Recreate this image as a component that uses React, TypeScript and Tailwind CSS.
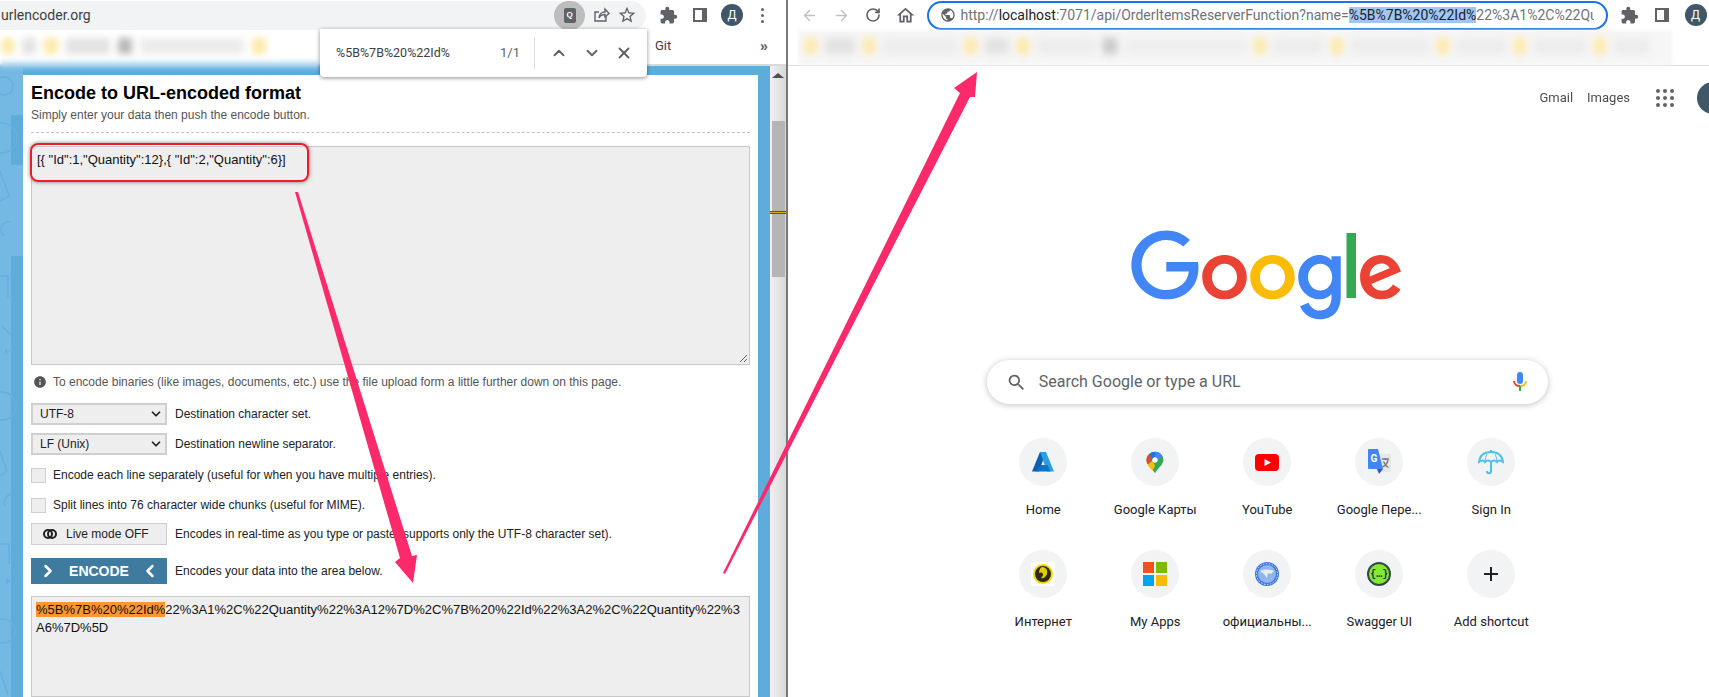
import { ChevronDown, ChevronUp, ChevronLeft, ChevronRight, X, ArrowLeft, ArrowRight, RotateCw } from "lucide-react";
import { MdExtension, MdPublic, MdSearch, MdOutlineHome, MdInfo, MdStarBorder } from "react-icons/md";

const shortcuts = [
  { label: "Home", icon: <AzureIcon /> },
  { label: "Google Карты", icon: <MapsIcon /> },
  { label: "YouTube", icon: <YoutubeIcon /> },
  { label: "Google Пере...", icon: <TranslateIcon /> },
  { label: "Sign In", icon: <UmbrellaIcon /> },
  { label: "Интернет", icon: <InternetIcon /> },
  { label: "My Apps", icon: <MicrosoftIcon /> },
  { label: "официальны...", icon: <GlobeBadgeIcon /> },
  { label: "Swagger UI", icon: <SwaggerIcon /> },
  { label: "Add shortcut", icon: <PlusIcon /> },
];

function AzureIcon() {
  return (
    <svg width="24" height="24" viewBox="0 0 24 24">
      <path d="M9 2h6L8 21.5H1z" fill="#0a5fb0" />
      <path d="M15 2l8 19.5h-7L9 2z" fill="#2a9fe0" />
      <path d="M10 15l6.5 0 3 6.5H5z" fill="#0f74c8" />
    </svg>
  );
}

function MapsIcon() {
  return (
    <svg width="20" height="25" viewBox="0 0 24 28">
      <path d="M12 1a10 10 0 0 1 10 10c0 6-6 9-10 16C8 20 2 17 2 11A10 10 0 0 1 12 1z" fill="#34a853" />
      <path d="M5 4a10 10 0 0 1 7-3v7a3 3 0 0 0-3 2z" fill="#1a73e8" />
      <path d="M12 1a10 10 0 0 1 9 6l-6 3a3 3 0 0 0-3-2z" fill="#4285f4" />
      <path d="M5 4l4 6-6 6c-2-4-2-9 2-12z" fill="#ea4335" />
      <path d="M9 12l-6 5 6 7 3-6z" fill="#fbbc04" />
      <circle cx="12" cy="11" r="3.2" fill="#fff" />
    </svg>
  );
}

function YoutubeIcon() {
  return (
    <svg width="24" height="17" viewBox="0 0 24 17">
      <rect width="24" height="17" rx="4" fill="#ff0000" />
      <path d="M9.5 5l6.5 3.5L9.5 12z" fill="#fff" />
    </svg>
  );
}

function TranslateIcon() {
  return (
    <svg width="24" height="26" viewBox="0 0 24 26">
      <rect x="10" y="5" width="14" height="18" fill="#e4e6e8" />
      <path d="M15 10h7M18.5 9v2M21 11c-1 4-3 6-5.5 7M16.5 12.5c1 2.5 3 5 5 6" stroke="#777" strokeWidth="1.3" fill="none" />
      <path d="M1 1c0-.5.4-1 1-1h9l5 20H2c-.6 0-1-.4-1-1z" fill="#4285f4" />
      <path d="M10 20h6l-4 5z" fill="#3a55c8" />
      <text x="3.5" y="13" fontFamily="Roboto, sans-serif" fontWeight="700" fontSize="10" fill="#fff">G</text>
    </svg>
  );
}

function UmbrellaIcon() {
  return (
    <svg width="26" height="26" viewBox="0 0 26 26" fill="none" stroke="#4fc0e8" strokeWidth="2">
      <path d="M1 13C2 6 7 3 13 3s11 3 12 10c-3-2-5-2-6 0-2-2-4-2-6 0-2-2-4-2-6 0-1-2-3-2-6 0z" />
      <path d="M13 1v2M13 13v9c0 3-4 3-4 0" />
      <path d="M9 5c-1 2-2 5-2 8M17 5c1 2 2 5 2 8" strokeWidth="1" />
    </svg>
  );
}

function InternetIcon() {
  return (
    <div className="flex h-6 w-6 items-center justify-center rounded-[2px] bg-white">
      <svg width="20" height="20" viewBox="0 0 20 20">
        <circle cx="10" cy="10" r="9" fill="#2b2b1a" stroke="#f2d800" strokeWidth="2" />
        <path d="M9 3c4 0 6 3 5 7-1 3-4 5-6 4 2-2 3-4 1-5-1-1-2 0-3 0 0-3 1-5 3-6z" fill="#e8c800" />
      </svg>
    </div>
  );
}

function MicrosoftIcon() {
  return (
    <div className="grid grid-cols-2 gap-[2px]">
      <div className="h-[11px] w-[11px] bg-[#f25022]" />
      <div className="h-[11px] w-[11px] bg-[#7fba00]" />
      <div className="h-[11px] w-[11px] bg-[#00a4ef]" />
      <div className="h-[11px] w-[11px] bg-[#ffb900]" />
    </div>
  );
}

function GlobeBadgeIcon() {
  return (
    <svg width="24" height="24" viewBox="0 0 24 24">
      <circle cx="12" cy="12" r="12" fill="#3f78d8" />
      <circle cx="12" cy="12" r="9" fill="#8fb5ee" />
      <path d="M5 9c4-2 10-2 14 0l-3 3-3-1-1 5-3-4z" fill="#e8edf2" />
      <circle cx="12" cy="12" r="10.5" fill="none" stroke="#dce8fa" strokeWidth="1" strokeDasharray="1.5 1.5" />
    </svg>
  );
}

function SwaggerIcon() {
  return (
    <div className="flex h-6 w-6 items-center justify-center rounded-full border-2 border-[#2f4a4f] bg-[#85ea2d] font-['Liberation_Mono',monospace] text-[10px] font-bold text-[#173647]">
      {"{…}"}
    </div>
  );
}

function PlusIcon() {
  return (
    <svg width="14" height="14" viewBox="0 0 14 14">
      <path d="M7 0v14M0 7h14" stroke="#202124" strokeWidth="2" />
    </svg>
  );
}

function ShareIcon() {
  return (
    <svg width="18" height="18" viewBox="0 0 18 18" fill="none" stroke="#5f6368" strokeWidth="1.4">
      <path d="M14 10v5H3V6h4" />
      <path d="M7 12c0-4 3-6 6-6V3l4 4.5L13 11V8.500c-3 0-5 1-6 3.500z" />
    </svg>
  );
}

function PanelIcon() {
  return <div className="h-[14px] w-[14px] border-[2px] border-r-[5px] border-[#5f6368] bg-white" />;
}

function Avatar() {
  return (
    <div className="flex h-[22px] w-[22px] items-center justify-center rounded-full bg-[#3f5766] font-['Roboto',sans-serif] text-[12px] text-white">
      Д
    </div>
  );
}

function Dots() {
  return (
    <div className="flex w-[4px] flex-col gap-[3px]">
      <div className="h-[3px] w-[3px] rounded-full bg-[#5f6368]" />
      <div className="h-[3px] w-[3px] rounded-full bg-[#5f6368]" />
      <div className="h-[3px] w-[3px] rounded-full bg-[#5f6368]" />
    </div>
  );
}

function SelectBox({ value }: { value: string }) {
  return (
    <div className="flex h-[22px] w-[136px] items-center justify-between border-2 border-[#cfcfcf] bg-[#eeeeee] pl-[7px] pr-[2px] text-[12px] text-[#222]">
      {value}
      <ChevronDown className="h-[14px] w-[14px] text-[#222]" strokeWidth={3} />
    </div>
  );
}

function LeftStrip() {
  return (
    <svg className="w-[23px] shrink-0" width="23" height="631" viewBox="0 0 23 631" fill="none">
      <rect width="23" height="631" fill="#74b9e3" />
      <rect x="11" y="49" width="12" height="50" fill="#5dacdc" />
      <rect x="11" y="190" width="12" height="441" fill="#5dacdc" />
      <g stroke="#66b0de" strokeWidth="1.5">
        <circle cx="4" cy="20" r="9" />
        <circle cx="2" cy="72" r="15" />
        <path d="M0 105l9 25-9 5M4 170a8 8 0 0 1 7-14M0 210h8v22M2 260l8 8M5 285h4M6 283v4" />
        <circle cx="2" cy="340" r="14" />
        <path d="M0 385l7 20-7 5M5 440a9 9 0 0 1 6-12M1 478l8 0v20M5 515h5M7 512v6" />
        <circle cx="3" cy="565" r="12" />
        <path d="M0 605l8 24" />
      </g>
    </svg>
  );
}

function BlurBookmarks({ items }: { items: [string, number][] }) {
  return (
    <div className="flex items-center gap-[8px] blur-[3.5px]">
      {items.map(([color, width], index) => (
        <div key={index} className="h-[16px]" style={{ backgroundColor: color, width }} />
      ))}
    </div>
  );
}

export default function App() {
  return (
    <div className="relative flex h-[697px] w-[1709px] overflow-hidden bg-white font-['Liberation_Sans',sans-serif]">
      {/* Left browser window */}
      <div className="flex h-full w-[786px] shrink-0 flex-col">
        <div className="flex h-[30px] items-center bg-white">
          <div className="flex h-[29px] w-[646px] items-center rounded-r-full bg-[#f1f3f4]">
            <span className="pl-[1px] font-['Roboto',sans-serif] text-[14px] text-[#3c4043]">urlencoder.org</span>
            <div className="ml-auto flex items-center gap-[7px] pr-[9px]">
              <div className="flex h-[29px] w-[31px] items-center justify-center rounded-full bg-[#bdbdbd]">
                <div className="flex h-[15px] w-[12px] items-center justify-center rounded-[2px] bg-[#5f6368] text-[8px] font-bold leading-none text-white">Q</div>
              </div>
              <ShareIcon />
              <MdStarBorder className="h-[20px] w-[20px] text-[#5f6368]" />
            </div>
          </div>
          <div className="flex flex-1 items-center pl-[13px]">
            <MdExtension className="h-[19px] w-[19px] text-[#5f6368]" />
            <div className="ml-[15px]"><PanelIcon /></div>
            <div className="ml-[14px]"><Avatar /></div>
            <div className="ml-[18px]"><Dots /></div>
          </div>
        </div>

        <div className="relative flex h-[36px] items-center border-b-2 border-[#d9d9d9] bg-white pb-[2px] pl-[2px]">
          <BlurBookmarks items={[["#fde9a8", 12], ["#e2e2e2", 14], ["#fde9a8", 14], ["#e2e2e2", 44], ["#b8b8b8", 14], ["#ececec", 104], ["#fde9a8", 14]]} />
          <span className="absolute left-[655px] font-['Roboto',sans-serif] text-[13px] text-[#3c4043]">Git</span>
          <span className="absolute left-[760px] text-[14px] font-bold text-[#5f6368]">»</span>
          <div className="absolute bottom-[-5px] left-0 h-[10px] w-[320px] bg-gradient-to-b from-white to-[#74b9e3] blur-[2px]" />
        </div>

        <div className="flex min-h-0 flex-1">
          <LeftStrip />
          <div className="flex flex-1 flex-col bg-[#5dacdc] pt-[9px] pr-[12px]">
            <div className="flex h-full flex-col bg-white px-[8px] pt-[7px] text-[#222]">
              <h1 className="text-[18px] font-bold leading-[22px] text-black">Encode to URL-encoded format</h1>
              <p className="mt-[2px] text-[12px] leading-[18px] text-[#555]">Simply enter your data then push the encode button.</p>
              <div className="mt-[8px] border-t border-dashed border-[#c4c4c4]" />

              <div className="relative mt-[13px] h-[219px] border border-[#c8c8c8] bg-[#eeeeee] px-[5px] pt-[4px] text-[13px] leading-[17px] text-[#111]">
                {'[{ "Id":1,"Quantity":12},{ "Id":2,"Quantity":6}]'}
                <div className="absolute -left-[2px] -top-[4px] h-[39px] w-[279px] rounded-lg border-2 border-[#ee1c25] shadow-[0_0_4px_rgba(0,0,0,0.5)]" />
                <svg className="absolute bottom-[1px] right-[1px]" width="10" height="10" viewBox="0 0 10 10" stroke="#666">
                  <path d="M9 2L2 9M9 6L6 9" />
                </svg>
              </div>

              <div className="mt-[9px] flex items-center gap-[6px] text-[12px] leading-[16px] text-[#555]">
                <MdInfo className="ml-[2px] h-[14px] w-[14px] text-[#555]" />
                To encode binaries (like images, documents, etc.) use the file upload form a little further down on this page.
              </div>

              <div className="mt-[13px] flex items-center gap-[8px] text-[12px]">
                <SelectBox value="UTF-8" />
                Destination character set.
              </div>
              <div className="mt-[8px] flex items-center gap-[8px] text-[12px]">
                <SelectBox value="LF (Unix)" />
                Destination newline separator.
              </div>
              <div className="mt-[11px] flex items-center gap-[3px] text-[12px]">
                <div className="h-[15px] w-[15px] border border-[#cfcfcf] bg-[#eeeeee]" />
                <span className="ml-[4px]">Encode each line separately (useful for when you have multiple entries).</span>
              </div>
              <div className="mt-[12px] flex items-center gap-[3px] text-[12px]">
                <div className="h-[15px] w-[15px] border border-[#cfcfcf] bg-[#eeeeee]" />
                <span className="ml-[4px]">Split lines into 76 character wide chunks (useful for MIME).</span>
              </div>
              <div className="mt-[9px] flex items-center gap-[8px] text-[12px]">
                <div className="flex h-[22px] w-[136px] items-center border border-[#cfcfcf] bg-[#eeeeee] pl-[11px]">
                  <div className="relative h-[10px] w-[14px]">
                    <div className="absolute left-0 top-0 h-[10px] w-[10px] rounded-full border-2 border-[#222]" />
                    <div className="absolute left-[4px] top-0 h-[10px] w-[10px] rounded-full border-2 border-[#222]" />
                  </div>
                  <span className="ml-[9px]">Live mode OFF</span>
                </div>
                Encodes in real-time as you type or paste (supports only the UTF-8 character set).
              </div>
              <div className="mt-[13px] flex items-center gap-[8px] text-[12px]">
                <div className="flex h-[26px] w-[136px] items-center justify-between bg-[#3f7a9f] px-[7px] text-[14px] font-bold text-white">
                  <ChevronRight className="h-[20px] w-[20px]" strokeWidth={3} />
                  ENCODE
                  <ChevronLeft className="h-[20px] w-[20px]" strokeWidth={3} />
                </div>
                Encodes your data into the area below.
              </div>

              <div className="mt-[12px] min-h-0 flex-1 break-all border border-[#c8c8c8] bg-[#eeeeee] px-[4px] pt-[4px] text-[13px] leading-[18px] text-[#111]">
                <span className="bg-[#ff9632]">%5B%7B%20%22Id%</span>22%3A1%2C%22Quantity%22%3A12%7D%2C%7B%20%22Id%22%3A2%2C%22Quantity%22%3<br />A6%7D%5D
              </div>
            </div>
          </div>

          {/* Scrollbar */}
          <div className="relative w-[16px] shrink-0 bg-gradient-to-r from-[#f1f1f1] to-[#d8d8d8]">
            <div className="mx-auto mt-[7px] h-0 w-0 border-x-[6px] border-b-[5px] border-x-transparent border-b-[#505050]" />
            <div className="absolute left-[2px] top-[55px] h-[156px] w-[13px] bg-[#b5b5b5]" />
            <div className="absolute left-0 top-[145px] h-[3px] w-[16px] border-y border-[#6b4e00] bg-[#e0b000]" />
          </div>
        </div>
      </div>

      <div className="w-[1.5px] shrink-0 bg-[#777]" />

      {/* Right browser window */}
      <div className="flex h-full min-w-0 flex-1 flex-col font-['Roboto',sans-serif]">
        <div className="flex h-[30px] items-center pl-[13px]">
          <ArrowLeft className="h-[17px] w-[17px] text-[#bdc1c6]" />
          <ArrowRight className="ml-[15px] h-[17px] w-[17px] text-[#bdc1c6]" />
          <RotateCw className="ml-[15px] h-[16px] w-[16px] text-[#5f6368]" strokeWidth={2.5} />
          <MdOutlineHome className="ml-[14px] h-[21px] w-[21px] text-[#5f6368]" />
          <div className="ml-[11px] flex h-[29px] w-[681px] items-center overflow-hidden rounded-full border-2 border-[#1a73e8] pl-[11px] pr-[12px]">
            <MdPublic className="h-[16px] w-[16px] shrink-0 text-[#5f6368]" />
            <div className="ml-[5px] overflow-hidden whitespace-nowrap text-[14px] leading-[24px] text-[#6f7377]">
              http://<span className="text-[#202124]">localhost</span>:7071/api/OrderItemsReserverFunction?name=<span className="bg-[#a1c6f5] text-[#202124]">%5B%7B%20%22Id%</span>22%3A1%2C%22Quantity
            </div>
          </div>
          <MdExtension className="ml-[12px] h-[19px] w-[19px] text-[#5f6368]" />
          <div className="ml-[16px]"><PanelIcon /></div>
          <div className="ml-[16px]"><Avatar /></div>
        </div>

        <div className="ml-[10px] mr-[37px] flex h-[35px] items-center bg-[#f6f6f6] pb-[4px] pl-[7px] blur-[1.5px]">
          <BlurBookmarks items={[["#fde9a8", 12], ["#e2e2e2", 30], ["#fde9a8", 12], ["#ececec", 74], ["#fde9a8", 12], ["#e2e2e2", 24], ["#fde9a8", 12], ["#ececec", 58], ["#c8c8c8", 14], ["#eeeeee", 121], ["#fde9a8", 12], ["#ececec", 49], ["#fde9a8", 12], ["#ececec", 78], ["#fde9a8", 12], ["#ececec", 49], ["#fde9a8", 12], ["#ececec", 52], ["#fde9a8", 12], ["#ececec", 36]]} />
        </div>
        <div className="border-t border-[#dadce0]" />

        <div className="flex items-center justify-end pt-[16px] text-[13px] text-[#202124]">
          <span className="opacity-80">Gmail</span>
          <span className="ml-[14px] opacity-80">Images</span>
          <div className="ml-[26px] grid grid-cols-3 gap-[3px]">
            {Array.from({ length: 9 }).map((_, index) => (
              <div key={index} className="h-[4px] w-[4px] rounded-full bg-[#5f6368]" />
            ))}
          </div>
          <div className="ml-[23px] mr-[-20px] h-[32px] w-[32px] rounded-full bg-[#3f5766]" />
        </div>

        <div className="mt-[116px] flex justify-center pl-[38px]">
          <svg width="272" height="92" viewBox="0 0 272 92">
            <path fill="#EA4335" d="M115.75 47.18c0 12.77-9.99 22.18-22.25 22.18s-22.25-9.41-22.25-22.18C71.25 34.32 81.24 25 93.5 25s22.25 9.32 22.25 22.18zm-9.74 0c0-7.98-5.79-13.44-12.51-13.44S80.99 39.2 80.99 47.18c0 7.9 5.79 13.44 12.51 13.44s12.51-5.55 12.51-13.44z" />
            <path fill="#FBBC05" d="M163.75 47.18c0 12.77-9.99 22.18-22.25 22.18s-22.25-9.41-22.25-22.18c0-12.85 9.99-22.18 22.25-22.18s22.25 9.32 22.25 22.18zm-9.74 0c0-7.98-5.79-13.44-12.51-13.44s-12.51 5.46-12.51 13.44c0 7.9 5.79 13.44 12.51 13.44s12.51-5.55 12.51-13.44z" />
            <path fill="#4285F4" d="M209.75 26.34v39.82c0 16.38-9.66 23.07-21.08 23.07-10.75 0-17.22-7.19-19.66-13.07l8.48-3.53c1.51 3.61 5.21 7.87 11.17 7.87 7.31 0 11.84-4.51 11.84-13v-3.19h-.34c-2.18 2.69-6.38 5.04-11.68 5.04-11.09 0-21.25-9.66-21.25-22.09 0-12.52 10.16-22.26 21.25-22.26 5.29 0 9.49 2.35 11.68 4.96h.34v-3.61h9.25zm-8.56 20.92c0-7.81-5.21-13.52-11.84-13.52-6.72 0-12.35 5.71-12.35 13.52 0 7.73 5.63 13.36 12.35 13.36 6.63 0 11.84-5.63 11.84-13.36z" />
            <path fill="#34A853" d="M225 3v65h-9.5V3h9.5z" />
            <path fill="#EA4335" d="M262.02 54.48l7.56 5.04c-2.44 3.61-8.32 9.83-18.48 9.83-12.6 0-22.01-9.74-22.01-22.18 0-13.19 9.49-22.18 20.92-22.18 11.51 0 17.14 9.16 18.98 14.11l1.01 2.52-29.65 12.28c2.27 4.45 5.8 6.72 10.75 6.72 4.96 0 8.4-2.44 10.92-6.14zm-23.27-7.98l19.82-8.23c-1.09-2.77-4.37-4.7-8.23-4.7-4.95 0-11.84 4.37-11.59 12.93z" />
            <path fill="#4285F4" d="M35.29 41.41V32H67c.31 1.64.47 3.58.47 5.68 0 7.06-1.93 15.79-8.15 22.01-6.05 6.3-13.78 9.66-24.02 9.66C16.32 69.35.36 53.89.36 34.91.36 15.93 16.32.47 35.3.47c10.5 0 17.98 4.12 23.6 9.49l-6.64 6.64c-4.03-3.78-9.49-6.72-16.97-6.72-13.86 0-24.7 11.17-24.7 25.03 0 13.86 10.84 25.03 24.7 25.03 8.99 0 14.11-3.61 17.39-6.89 2.66-2.66 4.41-6.46 5.1-11.65l-22.49.01z" />
          </svg>
        </div>

        <div className="mt-[38px] flex justify-center pl-[38px]">
          <div className="flex h-[44px] w-[561px] items-center rounded-full bg-white pl-[19px] pr-[21px] shadow-[0_1px_6px_rgba(32,33,36,0.28)]">
            <MdSearch className="h-[21px] w-[21px] text-[#5f6368]" />
            <span className="ml-[12px] text-[16px] text-[#5f6368]">Search Google or type a URL</span>
            <svg className="ml-auto" width="14" height="20" viewBox="0 0 14 20">
              <rect x="4" y="0" width="6" height="12" rx="3" fill="#4285f4" />
              <path d="M1 9c0 3 2.5 5 6 5" stroke="#ea4335" strokeWidth="2" fill="none" />
              <path d="M13 9c0 3-2.5 5-6 5" stroke="#fbbc04" strokeWidth="2" fill="none" />
              <rect x="6" y="14" width="2" height="5" fill="#34a853" />
            </svg>
          </div>
        </div>

        <div className="ml-[38px] mt-[34px] grid w-[560px] grid-cols-5 gap-y-[16px] self-center">
          {shortcuts.map((item) => (
            <div key={item.label} className="flex h-[96px] flex-col items-center">
              <div className="flex h-[48px] w-[48px] items-center justify-center rounded-full bg-[#f1f3f4]">{item.icon}</div>
              <span className="mt-[15px] whitespace-nowrap text-[13px] leading-[18px] text-[#202124]">{item.label}</span>
            </div>
          ))}
        </div>
      </div>

      {/* Annotation arrows */}
      <svg className="pointer-events-none absolute inset-0" width="1709" height="697" viewBox="0 0 1709 697">
        <polygon points="295,192 298,192 412,556 417,555 413,583 395,562 400,558" fill="#fd2a6b" />
        <polygon points="723,573 725,574 970,97 975,97 977,72 954,88 960,93" fill="#fd2a6b" />
      </svg>

      {/* Find bar */}
      <div className="absolute left-[320px] top-[29px] flex h-[48px] w-[327px] items-center rounded-b-[4px] bg-white pl-[16px] font-['Roboto',sans-serif] text-[13px] text-[#3c4043] shadow-[0_1px_4px_rgba(0,0,0,0.45)]">
        <span className="w-[164px] text-[12.5px]">%5B%7B%20%22Id%</span>
        <span className="w-[34px] text-[#5f6368]">1/1</span>
        <div className="h-[32px] w-px bg-[#dadce0]" />
        <ChevronUp className="ml-[15px] h-[18px] w-[18px] text-[#5f6368]" strokeWidth={2.5} />
        <ChevronDown className="ml-[15px] h-[18px] w-[18px] text-[#5f6368]" strokeWidth={2.5} />
        <X className="ml-[14px] h-[18px] w-[18px] text-[#5f6368]" strokeWidth={2.5} />
      </div>
    </div>
  );
}
